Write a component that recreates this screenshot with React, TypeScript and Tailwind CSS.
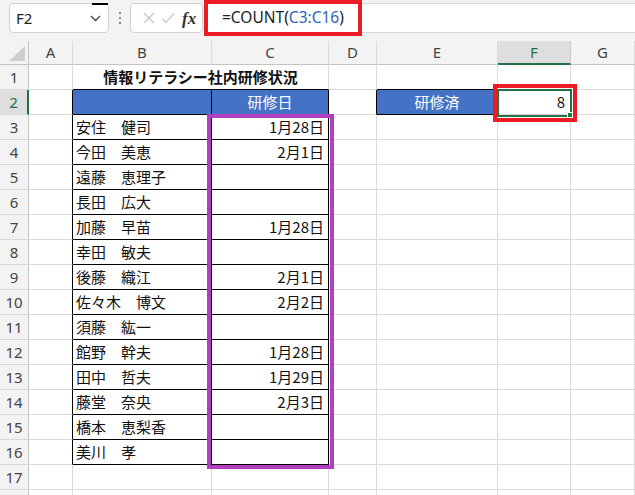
import React from 'react';

type ColKey = 'A' | 'B' | 'C' | 'D' | 'E' | 'F' | 'G';

const COLS: ColKey[] = ['A', 'B', 'C', 'D', 'E', 'F', 'G'];

const NAMES: Record<number, string> = {
  3: '安住　健司',
  4: '今田　美恵',
  5: '遠藤　恵理子',
  6: '長田　広大',
  7: '加藤　早苗',
  8: '幸田　敏夫',
  9: '後藤　織江',
  10: '佐々木　博文',
  11: '須藤　紘一',
  12: '館野　幹夫',
  13: '田中　哲夫',
  14: '藤堂　奈央',
  15: '橋本　恵梨香',
  16: '美川　孝',
};

const DATES: Record<number, string> = {
  3: '1月28日',
  4: '2月1日',
  7: '1月28日',
  9: '2月1日',
  10: '2月2日',
  12: '1月28日',
  13: '1月29日',
  14: '2月3日',
};

// row 18 only peeks in at the bottom edge, so its number is not drawn
const ROWS = Array.from({ length: 18 }, (_, i) => i + 1);

const isTable = (r: number, c: ColKey | undefined) =>
  ((c === 'B' || c === 'C') && r >= 2 && r <= 16) || (c === 'E' && r === 2);

const nextCol = (c: ColKey) => COLS[COLS.indexOf(c) + 1];

const edgeB = (r: number, c: ColKey) =>
  isTable(r, c) || isTable(r + 1, c) ? 'border-b-black' : 'border-b-[#dadada]';

const edgeR = (r: number, c: ColKey) =>
  isTable(r, c) || isTable(r, nextCol(c)) ? 'border-r-black' : 'border-r-[#dadada]';

const FONT = "font-['Noto_Sans_CJK_JP',sans-serif]";

const FormulaBar: React.FC = () => (
  <div className="h-[41px] bg-[#f3f3f3] flex items-start pt-[3px] relative">
    <div className="relative ml-[9px] w-[100px] h-[30px] bg-white border border-[#d1d1d1] rounded-[4px] flex items-center pl-[6px] pr-[6px]">
      <span className="flex-1 text-[15px] text-[#222] font-['Noto_Sans',sans-serif] leading-none">F2</span>
      <svg width="11" height="7" viewBox="0 0 11 7" className="mr-[1px]">
        <path d="M1 1 L5.5 5.5 L10 1" fill="none" stroke="#444" strokeWidth="1.3" />
      </svg>
      <div className="absolute left-[82px] -top-[1px] w-[16px] h-[2px] bg-black" />
    </div>
    <div className="w-[21px] h-[30px] flex flex-col items-center justify-center gap-[3px]">
      <div className="w-[2px] h-[2px] bg-[#8a8a8a]" />
      <div className="w-[2px] h-[2px] bg-[#8a8a8a]" />
      <div className="w-[2px] h-[2px] bg-[#8a8a8a]" />
    </div>
    <div className="w-[73px] h-[30px] bg-white border border-[#d1d1d1] rounded-[4px] flex items-center pl-[12px]">
      <svg width="12" height="12" viewBox="0 0 12 12">
        <path d="M1 1 L11 11 M11 1 L1 11" stroke="#c4c4c4" strokeWidth="1.2" />
      </svg>
      <svg width="14" height="12" viewBox="0 0 14 12" className="ml-[6px]">
        <path d="M1 6.5 L5 10.5 L13 1.5" fill="none" stroke="#c4c4c4" strokeWidth="1.2" />
      </svg>
      <span className="ml-[7px] italic text-[17px] text-[#333] font-['Liberation_Serif',serif] leading-none font-semibold">fx</span>
    </div>
    <div className="ml-[5px] flex-1 h-[30px] bg-white border-y border-[#d6d6d6] flex items-center pl-[14px]">
      <span className="text-[15.5px] text-[#222] font-['Noto_Sans',sans-serif] leading-none">
        =COUNT(
        <span className="relative text-[#2f63b8]">
          C3:C16
          <span className="absolute left-0 right-0 -bottom-[6px] h-[2px] bg-[#b13fc0]" />
        </span>
        )
      </span>
    </div>
    <div className="absolute left-[204px] top-0 w-[158px] h-[36px] border-[4px] border-[#ec1c24]" />
  </div>
);

const ColumnHeader: React.FC = () => (
  <>
    <div className="h-[24px] bg-[#f3f3f3] border-r border-r-[#c4c4c4] border-b border-b-[#c4c4c4] relative">
      <svg width="18" height="16" viewBox="0 0 18 16" className="absolute left-[8px] top-[5px]">
        <polygon points="17,0 17,15 1,15" fill="#cfcfcf" />
      </svg>
    </div>
    {COLS.map((c) =>
      c === 'F' ? (
        <div
          key={c}
          className="h-[24px] bg-[#dedede] border-r border-r-[#c8c8c8] border-b-2 border-b-[#217346] flex items-center justify-center text-[15px] text-[#217346] font-['Noto_Sans',sans-serif]"
        >
          {c}
        </div>
      ) : (
        <div
          key={c}
          className="h-[24px] bg-[#f3f3f3] border-r border-r-[#dadada] border-b border-b-[#c4c4c4] flex items-center justify-center text-[15px] text-[#444] font-['Noto_Sans',sans-serif]"
        >
          {c}
        </div>
      )
    )}
  </>
);

const Cell: React.FC<{ r: number; c: ColKey }> = ({ r, c }) => {
  const edges = `border-r border-b ${edgeR(r, c)} ${edgeB(r, c)}`;
  if (c === 'B' && r === 2) {
    return <div className={`h-[25px] bg-[#4472c4] ${edges}`} />;
  }
  if (c === 'C' && r === 2) {
    return (
      <div className={`h-[25px] bg-[#4472c4] ${edges} flex items-center justify-center text-[15px] text-white ${FONT}`}>
        研修日
      </div>
    );
  }
  if (c === 'E' && r === 2) {
    return (
      <div className={`h-[25px] bg-[#4472c4] ${edges} flex items-center justify-center text-[15px] text-white ${FONT}`}>
        研修済
      </div>
    );
  }
  if (c === 'F' && r === 2) {
    return (
      <div className={`h-[25px] bg-white ${edges} flex items-center justify-end pr-[5px] text-[15px] text-[#111] ${FONT}`}>
        8
      </div>
    );
  }
  if (c === 'B' && NAMES[r]) {
    return (
      <div className={`h-[25px] bg-white ${edges} flex items-center pl-[3px] text-[15px] text-[#111] whitespace-pre ${FONT}`}>
        {NAMES[r]}
      </div>
    );
  }
  if (c === 'C' && DATES[r]) {
    return (
      <div className={`h-[25px] bg-white ${edges} flex items-center justify-end pr-[4px] text-[15px] text-[#111] ${FONT}`}>
        {DATES[r]}
      </div>
    );
  }
  return <div className={`h-[25px] bg-white ${edges}`} />;
};

const RowHeader: React.FC<{ r: number }> = ({ r }) =>
  r === 2 ? (
    <div className="h-[25px] bg-[#dedede] border-r-2 border-r-[#217346] border-b border-b-[#dadada] flex items-center justify-center text-[15px] text-[#217346] font-['Noto_Sans',sans-serif]">
      {r}
    </div>
  ) : (
    <div className="h-[25px] bg-[#f3f3f3] border-r border-r-[#c4c4c4] border-b border-b-[#dadada] flex items-center justify-center text-[15px] text-[#444] font-['Noto_Sans',sans-serif]">
      {r < 18 ? r : ''}
    </div>
  );

export default function App() {
  return (
    <div className="relative w-[635px] h-[495px] overflow-hidden bg-white">
      <FormulaBar />
      <div className="grid grid-cols-[29px_44px_139px_117px_48px_121px_73px_64px]">
        <ColumnHeader />
        {ROWS.map((r) => (
          <React.Fragment key={r}>
            <RowHeader r={r} />
            {r === 1 ? (
              <>
                <Cell r={1} c="A" />
                <div className={`col-span-2 h-[25px] bg-white border-r border-b border-r-[#dadada] border-b-black flex items-center justify-center text-[15px] font-bold text-[#111] ${FONT}`}>
                  情報リテラシー社内研修状況
                </div>
                <Cell r={1} c="D" />
                <Cell r={1} c="E" />
                <Cell r={1} c="F" />
                <Cell r={1} c="G" />
              </>
            ) : (
              COLS.map((c) => <Cell key={c} r={r} c={c} />)
            )}
          </React.Fragment>
        ))}
      </div>

      {/* selection on F2 */}
      <div className="absolute left-[497px] top-[89px] w-[75px] h-[28px] border-2 border-[#217346]" />
      <div className="absolute left-[567px] top-[112px] w-[6px] h-[6px] bg-[#217346] border border-white" />

      {/* annotations */}
      <div className="absolute left-[493px] top-[84px] w-[84px] h-[38px] border-[4px] border-[#ec1c24]" />
      <div className="absolute left-[207px] top-[114px] w-[127px] h-[355px] border-[4px] border-[#b13fc0]" />
    </div>
  );
}
